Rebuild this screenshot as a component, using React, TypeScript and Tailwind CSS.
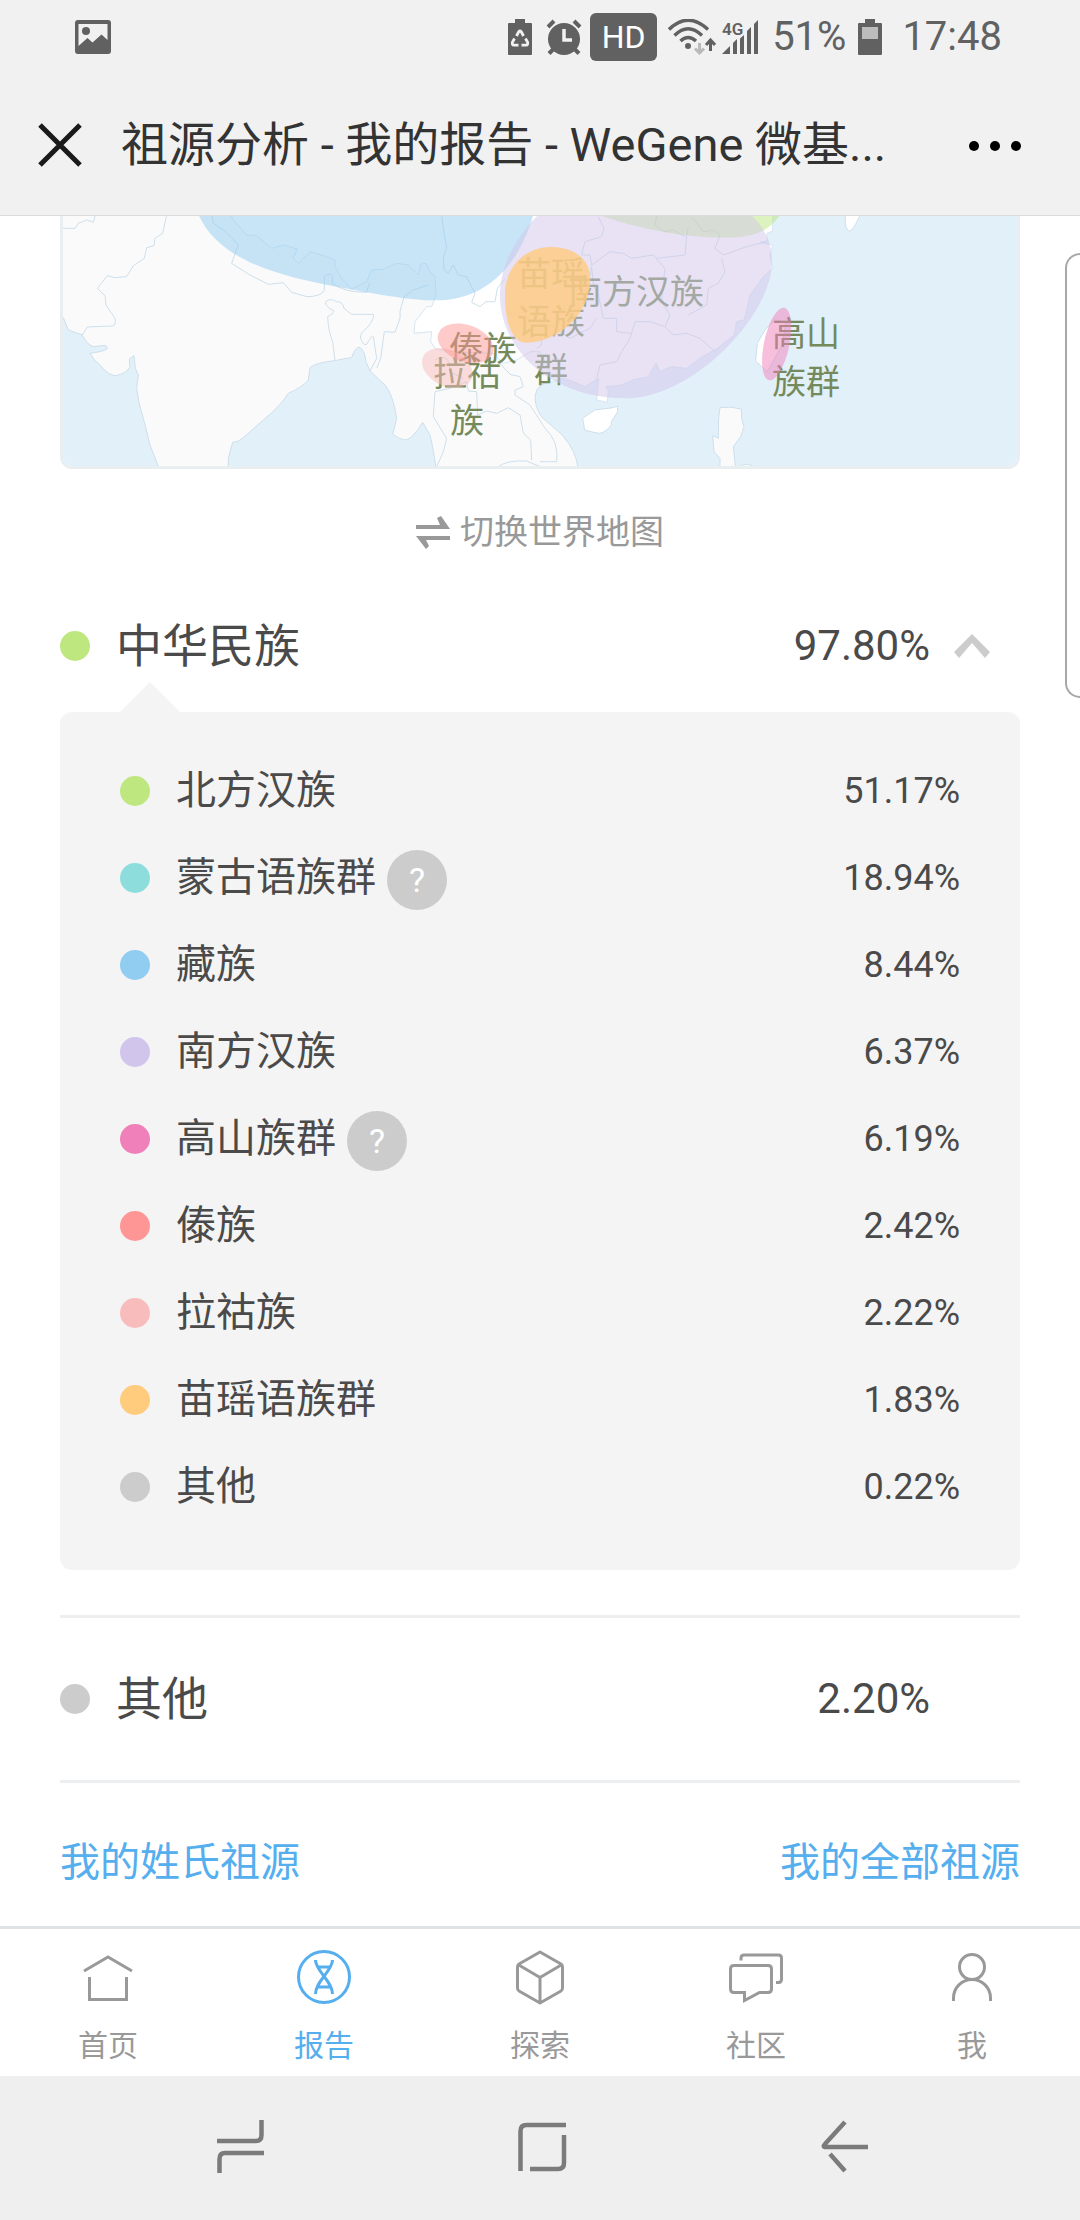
import React from "react";

type Item = { name: string; value: string; color: string; help?: boolean };

const groups: Item[] = [
  { name: "北方汉族", value: "51.17%", color: "bg-[#bfe780]" },
  { name: "蒙古语族群", value: "18.94%", color: "bg-[#8edddd]", help: true },
  { name: "藏族", value: "8.44%", color: "bg-[#91ccf1]" },
  { name: "南方汉族", value: "6.37%", color: "bg-[#d1c5ec]" },
  { name: "高山族群", value: "6.19%", color: "bg-[#ef80ba]", help: true },
  { name: "傣族", value: "2.42%", color: "bg-[#ff9696]" },
  { name: "拉祜族", value: "2.22%", color: "bg-[#f9bcbc]" },
  { name: "苗瑶语族群", value: "1.83%", color: "bg-[#ffcb7d]" },
  { name: "其他", value: "0.22%", color: "bg-[#cccccc]" },
];

function Dot({ color }: { color: string }) {
  return <span className={`size-[30px] shrink-0 rounded-full ${color}`} />;
}

function StatusBar() {
  return (
    <div className="flex h-[74px] items-center justify-between pr-[78px] pl-[75px] text-[#616161]">
      <svg className="h-[34px] w-9" viewBox="0 0 36 34" fill="currentColor">
        <path
          fillRule="evenodd"
          d="M3 0h30a3 3 0 0 1 3 3v28a3 3 0 0 1-3 3H3a3 3 0 0 1-3-3V3a3 3 0 0 1 3-3zM3.500 4v22l9-8 5 4.500 9-8 6 5.500V4z"
        />
        <circle cx="11" cy="11" r="4" />
      </svg>
      <div className="flex items-center">
        <svg className="h-9 w-6" viewBox="0 0 24 36" fill="currentColor">
          <path d="M7 0h10v4h6a1 1 0 0 1 1 1v30a1 1 0 0 1-1 1H1a1 1 0 0 1-1-1V5a1 1 0 0 1 1-1h6z" />
          <g fill="none" stroke="#f1f1f1" strokeWidth="2.800">
            <path d="M8.500 17l2.200-4.200q1.300-1.800 2.600 0l2.200 4.200" />
            <path d="M6.500 19.500l-2 3.500q-.9 3 1.600 3.200H10.500" />
            <path d="M17.500 19.500l2 3.500q.9 3-1.600 3.200H13.500" />
          </g>
        </svg>
        <svg className="ml-3.5 h-9 w-9" viewBox="0 0 36 36" fill="none" stroke="currentColor">
          <circle cx="18" cy="20" r="16" fill="currentColor" stroke="none" />
          <path strokeWidth="4" d="M2 8l6-6M34 8l-6-6M3 34.500l5-5M33 34.500l-5-5" />
          <path stroke="#f1f1f1" strokeWidth="3.500" d="M18 10v11h8" />
        </svg>
        <span className="ml-2 flex h-12 w-[67px] items-center justify-center rounded-md bg-[#616161] text-[32px] leading-none text-white">
          HD
        </span>
        <svg className="ml-[11px] h-9 w-12" viewBox="0 0 48 36" fill="none" stroke="currentColor">
          <path strokeWidth="3.500" d="M1 10.500Q20-8 40 10.500M6.500 16.500Q20 3 34 16.500M12.500 22Q20 15 28 22" />
          <circle cx="20" cy="27" r="3" fill="currentColor" stroke="none" />
          <path stroke="#bababa" strokeWidth="3" d="M31.500 24v10M27 29.500l4.500 4.500 4.500-4.500" />
          <path strokeWidth="3" d="M42.500 32V21M38 26l4.500-5 4.500 5" />
        </svg>
        <svg className="ml-1.5 h-9 w-9" viewBox="0 0 36 36" fill="currentColor">
          <text x="0" y="16" fontSize="17" fontWeight="600">4G</text>
          <path d="M0 35l8-8v8zM11 24l4-4v15h-4zM18 19.500l4-3.500v19h-4zM25 12l4-4v27h-4zM32 5l4-4v34h-4z" />
        </svg>
        <span className="ml-3.5 text-[40px] leading-none">51%</span>
        <svg className="ml-3 h-9 w-6" viewBox="0 0 24 36">
          <path fill="currentColor" d="M7 0h10v4h6a1 1 0 0 1 1 1v30a1 1 0 0 1-1 1H1a1 1 0 0 1-1-1V5a1 1 0 0 1 1-1h6z" />
          <path fill="#bdbdbd" d="M4 8h16v12H4z" />
        </svg>
        <span className="ml-5 text-[40px] leading-none">17:48</span>
      </div>
    </div>
  );
}

function RegionMap() {
  return (
    <svg className="block w-full" viewBox="63 216 954 250" role="img" aria-label="民族分布地图">
      <rect x="63" y="216" width="954" height="250" fill="#e2f0fa" />
      <g transform="translate(50 205) scale(.33333)" stroke="#cddfeb" strokeWidth="3" strokeLinejoin="round">
        <path
          fill="#fafafa"
          d="M0 0L0 330L40 338L55 375L97 390Q110 418 130 425L165 421Q178 428 168 434L150 440L120 445Q130 465 150 480Q175 512 198 512Q230 505 240 485L238 462L252 452L256 490L265 510L260 550Q265 595 280 640L300 720L327 790H535V760L548 712Q565 712 580 698L640 645Q690 605 715 565Q760 545 775 525L780 488Q800 472 855 467L890 460L905 458Q915 425 930 427Q945 440 948 470L960 498L1005 540Q1030 570 1040 640L1028 688Q1050 705 1068 705Q1090 700 1118 652L1140 690Q1150 730 1158 790H1584Q1580 740 1537 690L1474 635Q1452 600 1456 570Q1462 535 1502 530L1700 300V0Z"
        />
        <path
          fill="#ffffff"
          stroke="#d5e6f2"
          d="M535 20L550 45L590 90L620 92L665 130L700 120L742 132L730 160L745 175L780 140L830 155L855 165L855 185L875 220L905 252L950 230L965 195L1000 193L1040 175L1075 180L1105 210L1112 178L1128 175L1140 200L1155 215L1158 270L1145 305L1130 305L1095 350L1092 385L1145 380L1142 410L1155 430L1200 440L1330 445L1360 475L1400 465L1440 440L1470 440L1500 500L1502 530L1540 520L1570 530L1605 545L1646 520L1640 585L1672 592L1675 560L1668 545L1715 540L1749 525L1795 515L1818 475L1830 500L1864 485L1910 490L1950 460L2002 430L2053 390L2060 350L2082 345L2094 300L2100 270L2140 215L2168 190L2160 150L2168 120L2130 112L2151 108L2151 85L2168 78L2168 20Z"
        />
        <path fill="#ffffff" stroke="#cddfeb" d="M1598 640L1634 615L1690 608L1703 603L1702 622L1684 650V660Q1665 685 1646 685Q1620 680 1604 675Z" />
        <path fill="#ffffff" stroke="#cddfeb" d="M2174 345L2145 375L2122 415L2117 468L2151 500L2197 420L2208 350Z" />
        <path fill="#fafafa" d="M2010 608Q2040 603 2074 612L2075 640L2082 665L2072 695L2050 725L2057 790H2010V760L1992 740L1988 692L2005 700L2006 640Z" />
        <path fill="#ffffff" d="M2386 20V60Q2392 80 2401 78Q2420 60 2434 20Z" />
        <path fill="#fafafa" d="M2061 790Q2090 765 2117 790Z" />
        <path
          fill="none"
          d="M38 70H75L85 55L110 45L130 52L136 30M350 30L338 85L315 100L312 122L290 128L283 160L250 182L230 215L195 218L172 212L142 250L165 272L168 300L195 340Q200 362 185 363L112 366L97 390M485 30L490 55L520 75L565 118L545 175L600 210L655 238L700 233L725 262L770 275Q815 275 823 255V215Q840 200 848 215L847 235Q880 262 950 262L958 235M855 467L848 410Q835 380 833 335Q850 328 852 318Q825 305 827 290Q840 278 860 290Q880 290 882 310L905 328H970Q975 340 950 370Q928 385 932 400Q938 422 950 418Q968 385 970 395L980 460L960 498M980 490L992 460L1003 380L1035 382L1050 340V320L1062 275L1090 255L1135 240M1175 30L1182 85L1190 130L1180 155L1182 195L1195 205L1210 180L1225 210L1250 215L1275 265L1265 292L1290 305L1308 290L1335 290L1342 250L1365 222M1158 790L1180 740L1190 700L1150 635L1155 560L1200 550L1250 530L1255 558L1280 560L1283 630L1310 618L1340 625L1375 608L1410 630L1420 685L1442 705L1445 765M1345 785Q1370 765 1430 768L1470 785M1470 770H1520Q1528 710 1485 670L1440 600L1395 570V555L1420 545L1410 515L1380 508L1350 475M1155 465Q1200 440 1200 500L1240 520M1460 430L1475 420L1470 380L1510 360"
        />
        <path
          fill="none"
          d="M1645 35L1662 70L1655 95L1605 110L1595 150L1620 150L1625 180L1680 140L1720 145L1745 160L1810 150L1820 160L1905 150L1910 95L1915 65M1820 33L1815 60L1845 80L1870 75L1905 95M1925 35L1960 80L1990 75L2010 90L1995 130L2020 150L2090 125L2150 110M2015 160L2025 200L2005 235L1975 250L1970 300L1915 330M1818 160L1845 190L1840 230L1835 290L1860 330L1845 365L1800 350L1755 350L1740 400L1715 440L1700 470L1650 480L1640 520M1845 365L1870 390L1910 385L1950 400L1995 440M1625 185L1630 240L1645 270L1660 340L1700 340L1700 380L1740 385M1625 185L1620 210M1370 320L1430 340L1500 360L1560 400L1620 370L1640 340"
        />
      </g>
      <g fill="#758a5b" fontSize="34" textAnchor="middle">
        <text x="551" y="286">苗瑶</text>
        <text x="551" y="334">语族</text>
        <text x="551" y="382">群</text>
        <text x="636" y="304">南方汉族</text>
        <text x="483" y="361">傣族</text>
        <text x="467" y="386">拉祜</text>
        <text x="467" y="433">族</text>
        <text x="806" y="346">高山</text>
        <text x="806" y="394">族群</text>
      </g>
      <g transform="translate(50 205) scale(.33333)" fillOpacity=".5">
        <path fill="#91ccf1" d="M442 20C500 170 700 215 860 245C1000 272 1100 287 1160 286C1330 285 1420 150 1452 20Z" />
        <path fill="#b9e67f" d="M1620 20C1780 80 1920 98 2025 98C2120 98 2160 75 2198 20Z" />
        <path fill="#d1c5ea" d="M1475 20C1400 90 1350 180 1350 270C1350 440 1510 580 1726 580C1930 580 2166 330 2166 170C2166 110 2140 60 2092 20Z" />
        <path fill="#ffcb7d" fillOpacity=".8" d="M1502 126C1570 126 1621 160 1621 225C1621 320 1530 413 1428 413C1385 413 1365 350 1365 270C1365 180 1430 126 1502 126Z" />
        <ellipse fill="#f9bcbc" cx="1192" cy="489" rx="80" ry="54" transform="rotate(25 1192 489)" />
        <ellipse fill="#ff9696" cx="1247" cy="415" rx="87" ry="55" transform="rotate(20 1247 415)" />
        <ellipse fill="#ef80ba" cx="2180" cy="417" rx="38" ry="111" transform="rotate(12 2180 417)" />
      </g>
    </svg>
  );
}

const tabs = [
  { label: "首页", icon: <path d="M6 24L30 10L54 24M11.500 30V52.500H48.500V30" /> },
  {
    label: "报告",
    active: true,
    icon: (
      <>
        <circle cx="30" cy="30" r="25.500" />
        <path d="M21.500 13C21.500 24 38.500 34 38.500 47M38.500 13C38.500 24 21.500 34 21.500 47M23 20H37M23 40H37" />
      </>
    ),
  },
  {
    label: "探索",
    icon: <path strokeLinejoin="round" d="M30 5L51 17Q52.500 18 52.500 20V41Q52.500 43 51 44L30 56L9 44Q7.500 43 7.500 41V20Q7.500 18 9 17ZM8 17.500L30 30.500L52 17.500M30 30.500V56" />,
  },
  {
    label: "社区",
    icon: (
      <path d="M15 13.500V11Q15 8 18 8H52.500Q55.500 8 55.500 11V32Q55.500 35.500 52.500 35.500H50M8 18.500H42Q45.500 18.500 45.500 22V42Q45.500 45.500 42 45.500H33.500L18.500 53.500V45.500H8Q4.500 45.500 4.500 42V22Q4.500 18.500 8 18.500Z" />
    ),
  },
  {
    label: "我",
    icon: (
      <>
        <circle cx="30" cy="20" r="12.500" />
        <path d="M11.500 54V51a18.500 18.500 0 0 1 37 0V54" />
      </>
    ),
  },
];

const systemKeys = [
  { label: "最近任务", d: "M7 23H46Q51.500 23 51.500 17V2M54 35H15Q9.500 35 9.500 41V55" },
  { label: "主屏幕", d: "M10.500 53V13Q10.500 7 16.500 7H56M20 51H48Q54 51 54 45V17" },
  { label: "返回", d: "M35 4L15 26Q12 29 16 29H58M20 36L35 53" },
];

export default function App() {
  return (
    <div className="relative flex min-h-screen flex-col bg-white font-['Roboto','Noto_Sans_CJK_SC',sans-serif] text-[#4a4a4a]">
      <header className="border-b border-[#d8dadb] bg-[#f1f1f1]">
        <StatusBar />
        <div className="flex h-[141px] items-center pr-[54px] pl-[35px]">
          <button aria-label="关闭" className="shrink-0">
            <svg className="size-[50px]" viewBox="0 0 50 50" fill="none" stroke="#1a1a1a" strokeWidth="5">
              <path d="M5 5L45 45M45 5L5 45" />
            </svg>
          </button>
          <h1 className="ml-9 flex-1 truncate text-[47px] leading-[64px] text-[#333333]">
            祖源分析 - 我的报告 - WeGene 微基...
          </h1>
          <button aria-label="更多" className="shrink-0">
            <svg className="h-[50px] w-[60px]" viewBox="0 0 60 50">
              <circle cx="8" cy="26" r="5" />
              <circle cx="29" cy="26" r="5" />
              <circle cx="50" cy="26" r="5" />
            </svg>
          </button>
        </div>
      </header>

      <main className="flex flex-1 flex-col px-[60px]">
        <div className="overflow-hidden rounded-b-xl border-x-3 border-b-3 border-[#e9eef1]">
          <RegionMap />
        </div>

        <button className="mt-[33px] flex h-[60px] items-center justify-center gap-2.5 text-[34px] leading-none text-[#999999]">
          <svg className="h-9 w-[34px]" viewBox="0 0 34 36" fill="currentColor">
            <path d="M0 11H24L21 4L25 2L34 15H0ZM34 26H10L13 32L10 35L0 22H34Z" />
          </svg>
          切换世界地图
        </button>

        <button aria-expanded="true" className="mt-12 flex h-[72px] items-center pr-[30px] text-[46px] leading-none">
          <Dot color="bg-[#bfe780]" />
          <span className="ml-[26px]">中华民族</span>
          <span className="ml-auto text-[42px]">97.80%</span>
          <svg className="ml-6 h-6 w-9" viewBox="0 0 36 24" fill="#cccccc">
            <path d="M18 0L36 18L31 24L18 9L5 24L0 18Z" />
          </svg>
        </button>

        <section>
          <svg className="ml-[60px] block h-[30px] w-[60px]" viewBox="0 0 60 30" fill="#f4f4f4">
            <path d="M30 0L60 30H0Z" />
          </svg>
          <ul className="rounded-xl bg-[#f4f4f4] px-[60px] pt-[35px] pb-10">
            {groups.map((g) => (
              <li key={g.name} className="flex h-[87px] items-center text-[40px] leading-none">
                <Dot color={g.color} />
                <span className="ml-[26px]">{g.name}</span>
                {g.help && (
                  <button
                    aria-label={`${g.name}说明`}
                    className="mt-1 ml-[11px] flex size-[60px] items-center justify-center rounded-full bg-[#cccccc] text-[34px] text-white"
                  >
                    ?
                  </button>
                )}
                <span className="ml-auto text-[36px]">{g.value}</span>
              </li>
            ))}
          </ul>
        </section>

        <div className="mt-[45px] flex h-[168px] items-center border-y-3 border-[#eceef0] pr-[90px] text-[46px] leading-none">
          <Dot color="bg-[#cccccc]" />
          <span className="ml-[26px]">其他</span>
          <span className="ml-auto text-[42px]">2.20%</span>
        </div>

        <div className="flex flex-1 items-center justify-between pt-4 text-[40px] leading-none text-[#55aeed]">
          <a href="#surname">我的姓氏祖源</a>
          <a href="#all">我的全部祖源</a>
        </div>
      </main>

      <nav className="grid grid-cols-5 border-t-3 border-[#dfe3e6] pt-[18px] pb-[15px]">
        {tabs.map((t) => (
          <a
            key={t.label}
            href={`#${t.label}`}
            className={`flex flex-col items-center text-[30px] leading-[30px] ${t.active ? "text-[#55aeed]" : "text-[#999999]"}`}
          >
            <svg className="size-[60px]" viewBox="0 0 60 60" fill="none" stroke="currentColor" strokeWidth="3">
              {t.icon}
            </svg>
            <span className="mt-6">{t.label}</span>
          </a>
        ))}
      </nav>

      <div className="flex h-36 items-center justify-between bg-[#efefef] px-[210px]">
        {systemKeys.map((k) => (
          <button key={k.label} aria-label={k.label}>
            <svg className="block size-[60px]" viewBox="0 0 60 60" fill="none" stroke="#7b7b7b" strokeWidth="4.500">
              <path d={k.d} />
            </svg>
          </button>
        ))}
      </div>

      <div className="absolute top-[253px] right-0 h-[445px] w-[15px] rounded-l-[15px] border-2 border-r-0 border-[#a8a8a8] bg-white" />
    </div>
  );
}
